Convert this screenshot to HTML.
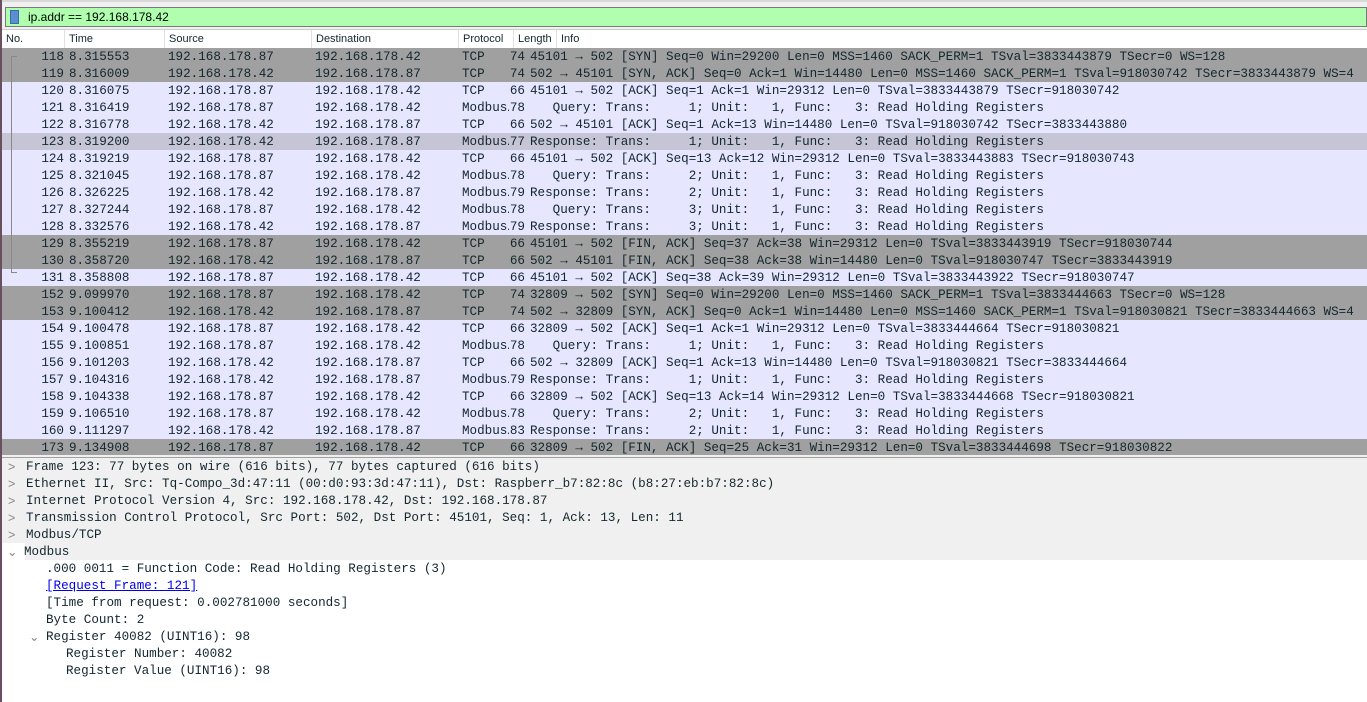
<!DOCTYPE html>
<html><head><meta charset="utf-8"><style>
*{margin:0;padding:0;box-sizing:border-box}
body{width:1367px;height:702px;overflow:hidden;background:#fff;position:relative;font-family:"Liberation Mono",monospace;font-size:12.6px;color:#12272e}
#lb{position:absolute;left:0;top:0;width:2px;height:702px;background:#6b4f5f}
#top{position:absolute;left:2px;top:0;right:0;height:29px;background:#f0f0f0;border-top:2px solid #d8d8d8}
#flt{position:absolute;left:3px;top:5px;right:0;height:20px;background:#afffaf;border:1px solid #7a7a7a;font-family:"Liberation Sans",sans-serif;font-size:12px;line-height:18px;padding-left:22px;color:#000}
#flt i{position:absolute;left:4px;top:2px;width:9px;height:14px;background:#5b8fd0;border:1px solid #3a6ab0}
#hdr{position:absolute;left:2px;top:29px;right:0;height:19px;background:#fff;font-family:"Liberation Sans",sans-serif;font-size:11px;line-height:19px;border-top:1px solid #ccc}
#hdr span{position:absolute;top:0;height:19px;padding-left:4px;border-right:1px solid #e0e0e0}
.r{position:absolute;left:2px;right:0;height:17px;line-height:19px;white-space:pre}
.g{background:#a0a0a0}.l{background:#e7e6ff}.s{background:#c6c5d6}
.r span{position:absolute;top:0}
.no{left:0;width:62px;text-align:right}
.t{left:67px}.src{left:166px}.dst{left:313px}.p{left:460px;width:47px;overflow:hidden}.len{left:490px;width:33px;text-align:right}.inf{left:528px}
#split{position:absolute;left:2px;right:0;top:455px;height:3px;background:#f0f0f0;border-bottom:1px solid #a0a0a0}
.d{position:absolute;left:2px;right:0;height:17px;line-height:19px;white-space:pre}
.d.gb{background:#f0f0f0}
.d b{font-weight:normal;position:absolute;left:6px;top:0;color:#888;font-family:"Liberation Sans",sans-serif}
.d span{position:absolute;top:0}
a{color:#0000ee}
.tree{position:absolute;left:11px;top:56px;width:1px;height:217px;background:#888}
.tk{position:absolute;left:11px;width:6px;height:1px;background:#888}
</style></head><body>
<div id="lb"></div>
<div id="top"><div id="flt"><i></i>ip.addr == 192.168.178.42</div></div>
<div id="hdr">
<span style="left:0;width:63px">No.</span>
<span style="left:63px;width:100px">Time</span>
<span style="left:163px;width:147px">Source</span>
<span style="left:310px;width:147px">Destination</span>
<span style="left:457px;width:55px">Protocol</span>
<span style="left:512px;width:43px">Length</span>
<span style="left:555px;border:0">Info</span>
</div>
<div id="rows"></div>
<div class="tree"></div>
<div class="tk" style="top:56px"></div>
<div class="tk" style="top:272px"></div>
<div id="split"></div>
<div class="d gb" style="top:458px"><b>&gt;</b><span style="left:24px">Frame 123: 77 bytes on wire (616 bits), 77 bytes captured (616 bits)</span></div>
<div class="d gb" style="top:475px"><b>&gt;</b><span style="left:24px">Ethernet II, Src: Tq-Compo_3d:47:11 (00:d0:93:3d:47:11), Dst: Raspberr_b7:82:8c (b8:27:eb:b7:82:8c)</span></div>
<div class="d gb" style="top:492px"><b>&gt;</b><span style="left:24px">Internet Protocol Version 4, Src: 192.168.178.42, Dst: 192.168.178.87</span></div>
<div class="d gb" style="top:509px"><b>&gt;</b><span style="left:24px">Transmission Control Protocol, Src Port: 502, Dst Port: 45101, Seq: 1, Ack: 13, Len: 11</span></div>
<div class="d gb" style="top:526px"><b>&gt;</b><span style="left:24px">Modbus/TCP</span></div>
<div class="d gb" style="top:543px;left:25px"><b style="left:-18px">&#8964;</b><span style="left:-1px">Modbus</span></div>
<div class="d" style="top:560px"><span style="left:44px">.000 0011 = Function Code: Read Holding Registers (3)</span></div>
<div class="d" style="top:577px"><span style="left:44px"><a><u>[Request Frame: 121]</u></a></span></div>
<div class="d" style="top:594px"><span style="left:44px">[Time from request: 0.002781000 seconds]</span></div>
<div class="d" style="top:611px"><span style="left:44px">Byte Count: 2</span></div>
<div class="d" style="top:628px"><b style="left:27px">&#8964;</b><span style="left:44px">Register 40082 (UINT16): 98</span></div>
<div class="d" style="top:645px"><span style="left:64px">Register Number: 40082</span></div>
<div class="d" style="top:662px"><span style="left:64px">Register Value (UINT16): 98</span></div>
<script>
var R=[
["g","118","8.315553","192.168.178.87","192.168.178.42","TCP","74","45101 → 502 [SYN] Seq=0 Win=29200 Len=0 MSS=1460 SACK_PERM=1 TSval=3833443879 TSecr=0 WS=128"],
["g","119","8.316009","192.168.178.42","192.168.178.87","TCP","74","502 → 45101 [SYN, ACK] Seq=0 Ack=1 Win=14480 Len=0 MSS=1460 SACK_PERM=1 TSval=918030742 TSecr=3833443879 WS=4"],
["l","120","8.316075","192.168.178.87","192.168.178.42","TCP","66","45101 → 502 [ACK] Seq=1 Ack=1 Win=29312 Len=0 TSval=3833443879 TSecr=918030742"],
["l","121","8.316419","192.168.178.87","192.168.178.42","Modbus…","78","   Query: Trans:     1; Unit:   1, Func:   3: Read Holding Registers"],
["l","122","8.316778","192.168.178.42","192.168.178.87","TCP","66","502 → 45101 [ACK] Seq=1 Ack=13 Win=14480 Len=0 TSval=918030742 TSecr=3833443880"],
["s","123","8.319200","192.168.178.42","192.168.178.87","Modbus…","77","Response: Trans:     1; Unit:   1, Func:   3: Read Holding Registers"],
["l","124","8.319219","192.168.178.87","192.168.178.42","TCP","66","45101 → 502 [ACK] Seq=13 Ack=12 Win=29312 Len=0 TSval=3833443883 TSecr=918030743"],
["l","125","8.321045","192.168.178.87","192.168.178.42","Modbus…","78","   Query: Trans:     2; Unit:   1, Func:   3: Read Holding Registers"],
["l","126","8.326225","192.168.178.42","192.168.178.87","Modbus…","79","Response: Trans:     2; Unit:   1, Func:   3: Read Holding Registers"],
["l","127","8.327244","192.168.178.87","192.168.178.42","Modbus…","78","   Query: Trans:     3; Unit:   1, Func:   3: Read Holding Registers"],
["l","128","8.332576","192.168.178.42","192.168.178.87","Modbus…","79","Response: Trans:     3; Unit:   1, Func:   3: Read Holding Registers"],
["g","129","8.355219","192.168.178.87","192.168.178.42","TCP","66","45101 → 502 [FIN, ACK] Seq=37 Ack=38 Win=29312 Len=0 TSval=3833443919 TSecr=918030744"],
["g","130","8.358720","192.168.178.42","192.168.178.87","TCP","66","502 → 45101 [FIN, ACK] Seq=38 Ack=38 Win=14480 Len=0 TSval=918030747 TSecr=3833443919"],
["l","131","8.358808","192.168.178.87","192.168.178.42","TCP","66","45101 → 502 [ACK] Seq=38 Ack=39 Win=29312 Len=0 TSval=3833443922 TSecr=918030747"],
["g","152","9.099970","192.168.178.87","192.168.178.42","TCP","74","32809 → 502 [SYN] Seq=0 Win=29200 Len=0 MSS=1460 SACK_PERM=1 TSval=3833444663 TSecr=0 WS=128"],
["g","153","9.100412","192.168.178.42","192.168.178.87","TCP","74","502 → 32809 [SYN, ACK] Seq=0 Ack=1 Win=14480 Len=0 MSS=1460 SACK_PERM=1 TSval=918030821 TSecr=3833444663 WS=4"],
["l","154","9.100478","192.168.178.87","192.168.178.42","TCP","66","32809 → 502 [ACK] Seq=1 Ack=1 Win=29312 Len=0 TSval=3833444664 TSecr=918030821"],
["l","155","9.100851","192.168.178.87","192.168.178.42","Modbus…","78","   Query: Trans:     1; Unit:   1, Func:   3: Read Holding Registers"],
["l","156","9.101203","192.168.178.42","192.168.178.87","TCP","66","502 → 32809 [ACK] Seq=1 Ack=13 Win=14480 Len=0 TSval=918030821 TSecr=3833444664"],
["l","157","9.104316","192.168.178.42","192.168.178.87","Modbus…","79","Response: Trans:     1; Unit:   1, Func:   3: Read Holding Registers"],
["l","158","9.104338","192.168.178.87","192.168.178.42","TCP","66","32809 → 502 [ACK] Seq=13 Ack=14 Win=29312 Len=0 TSval=3833444668 TSecr=918030821"],
["l","159","9.106510","192.168.178.87","192.168.178.42","Modbus…","78","   Query: Trans:     2; Unit:   1, Func:   3: Read Holding Registers"],
["l","160","9.111297","192.168.178.42","192.168.178.87","Modbus…","83","Response: Trans:     2; Unit:   1, Func:   3: Read Holding Registers"],
["g","173","9.134908","192.168.178.87","192.168.178.42","TCP","66","32809 → 502 [FIN, ACK] Seq=25 Ack=31 Win=29312 Len=0 TSval=3833444698 TSecr=918030822"]];
var h="";
R.forEach(function(r,i){var top=48+i*17;var ht=i==23?16:17;
h+='<div class="r '+r[0]+'" style="top:'+top+'px;height:'+ht+'px;overflow:hidden"><span class="no">'+r[1]+'</span><span class="t">'+r[2]+'</span><span class="src">'+r[3]+'</span><span class="dst">'+r[4]+'</span><span class="p">'+r[5]+'</span><span class="len">'+r[6]+'</span><span class="inf">'+r[7]+'</span></div>';});
document.getElementById("rows").innerHTML=h;
</script>
</body></html>
